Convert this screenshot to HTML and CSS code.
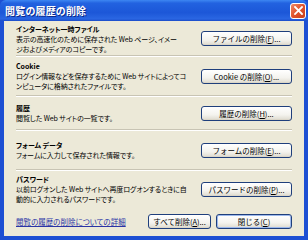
FILE: index.html
```html
<!DOCTYPE html>
<html lang="ja">
<head>
    <meta charset="UTF-8">
    <title>閲覧の履歴の削除</title>
    <link rel="stylesheet" href="styles.css">
</head>
<body>
    <div class="window">
        <div class="titlebar">
            <span class="title">閲覧の履歴の削除</span>
            <span class="close-box">
                <svg width="9" height="9" viewBox="0 0 9 9">
                    <path d="M1 1 L8 8 M8 1 L1 8" stroke="#fff" stroke-width="1.8" stroke-linecap="square"/>
                </svg>
            </span>
        </div>
        <div class="body">
            <div class="section s1">
                <div class="info">
                    <div class="head">インターネット一時ファイル</div>
                    <div class="desc">表示の高速化のために保存された Web ページ、イメー<br>ジおよびメディアのコピーです。</div>
                </div>
                <button class="btn">ファイルの削除(<u>F</u>)...</button>
            </div>
            <div class="section s2">
                <div class="info">
                    <div class="head">Cookie</div>
                    <div class="desc">ログイン情報などを保存するために Web サイトによってコ<br>ンピュータに格納されたファイルです。</div>
                </div>
                <button class="btn">Cookie の削除(<u>O</u>)...</button>
            </div>
            <div class="section s3">
                <div class="info">
                    <div class="head">履歴</div>
                    <div class="desc">閲覧した Web サイトの一覧です。</div>
                </div>
                <button class="btn">履歴の削除(<u>H</u>)...</button>
            </div>
            <div class="section s4">
                <div class="info">
                    <div class="head">フォーム データ</div>
                    <div class="desc">フォームに入力して保存された情報です。</div>
                </div>
                <button class="btn">フォームの削除(<u>E</u>)...</button>
            </div>
            <div class="section s5">
                <div class="info">
                    <div class="head">パスワード</div>
                    <div class="desc">以前ログオンした Web サイトへ再度ログオンするときに自<br>動的に入力されるパスワードです。</div>
                </div>
                <button class="btn">パスワードの削除(<u>P</u>)...</button>
            </div>
            <div class="footer">
                <a class="more" href="#">閲覧の履歴の削除についての詳細</a>
                <button class="btn btn-all">すべて削除(<u>A</u>)...</button>
                <button class="btn btn-close">閉じる(<u>C</u>)</button>
            </div>
        </div>
    </div>
</body>
</html>
```

FILE: styles.css
```css
body {
    margin: 0;
    width: 308px;
    height: 240px;
    overflow: hidden;
    font-family: "Noto Sans CJK JP", "Noto Sans", sans-serif;
    font-feature-settings: "palt";
}
.window {
    display: flex;
    flex-direction: column;
    width: 308px;
    height: 240px;
    background-color: #1d4fd3;
}
.titlebar {
    display: flex;
    align-items: center;
    height: 21px;
    padding: 0 2px 0 5px;
    background: linear-gradient(to bottom, #3d86f2 0%, #2262e0 15%, #1c57d8 60%, #2a66e2 90%, #1a4bc8 100%);
    border-radius: 6px 6px 0 0;
}
.titlebar .title {
    flex-grow: 1;
    color: #fff;
    font-size: 10px;
    font-weight: bold;
    letter-spacing: 0.2px;
    text-shadow: 1px 1px 0 #0b2a8a;
}
.close-box {
    display: flex;
    align-items: center;
    justify-content: center;
    width: 14px;
    height: 14px;
    border: 1px solid #fff;
    border-radius: 3px;
    background: linear-gradient(135deg, #f08a68 0%, #e0532c 50%, #c8401c 100%);
}
.body {
    flex-grow: 1;
    margin: 0 4px 4px 4px;
    padding: 0 12px;
    background-color: #ece9d8;
    display: flex;
    flex-direction: column;
}
.section {
    display: flex;
    align-items: center;
    gap: 4px;
    border-bottom: 1px solid #c8c4b4;
    box-shadow: 0 1px 0 #fff;
}
.s1 { height: 33px; padding-top: 1px; }
.s2 { height: 38px; margin-top: 1px; }
.s3 { height: 32px; margin-top: 1px; }
.s4 { height: 38px; margin-top: 1px; }
.s5 { height: 36px; margin-top: 1px; border-bottom: none; box-shadow: none; }
.info {
    flex-grow: 1;
    font-size: 7px;
    line-height: 10px;
    color: #000;
    white-space: nowrap;
}
.head {
    font-weight: bold;
}
.desc {
    letter-spacing: -0.1px;
}
.btn {
    flex-shrink: 0;
    width: 91px;
    height: 15px;
    padding: 0;
    border: 1px solid #1f3f7c;
    border-radius: 3px;
    background: linear-gradient(to bottom, #ffffff 0%, #f4f3ee 60%, #e3e0d6 90%, #d6d0c0 100%);
    font-family: inherit;
    font-size: 7.5px;
    color: #000;
    white-space: nowrap;
}
.footer {
    display: flex;
    align-items: center;
    gap: 5px;
    margin-top: 7px;
}
.more {
    flex-grow: 1;
    font-size: 7.5px;
    color: #2a34a6;
    text-decoration: underline;
}
.btn-all {
    width: 63px;
}
.btn-close {
    width: 76px;
    box-shadow: inset 0 0 0 1px #9cb8ec;
}
```
